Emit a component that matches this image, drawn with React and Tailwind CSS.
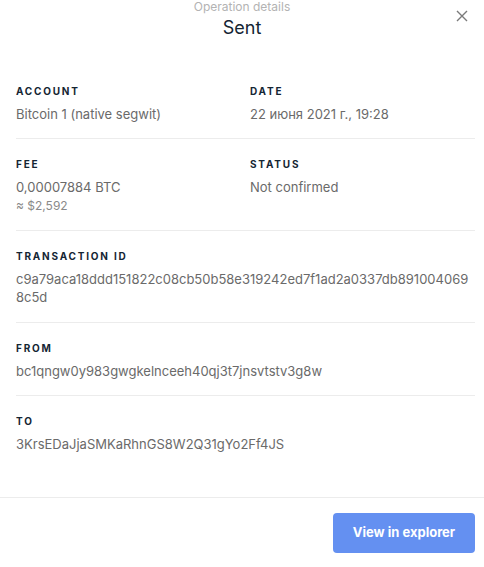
export default function App() {
  const Label = ({ children }) => (
    <div className="text-[10px] leading-[12px] font-bold tracking-[0.18em] text-[#142533] uppercase">{children}</div>
  );
  const Value = ({ children }) => (
    <div className="mt-2 text-[13px] leading-[18px] text-[#6a6a6a] break-all">{children}</div>
  );
  return (
    <div className="w-[484px] h-[567px] bg-white flex flex-col" style={{ fontFamily: "Inter, 'Noto Sans', sans-serif" }}>
      <div className="relative h-[66px] flex flex-col items-center">
        <div className="text-[12px] leading-[14px] text-[#b3b3b3]">Operation details</div>
        <div className="mt-[3px] text-[18px] leading-[22px] text-[#142533]">Sent</div>
        <button className="absolute right-[16px] top-[10px] w-[12px] h-[12px] flex items-center justify-center">
          <svg width="12" height="12" viewBox="0 0 12 12" fill="none" stroke="#7a7a7a" strokeWidth="1.4">
            <path d="M1 1L11 11M11 1L1 11" />
          </svg>
        </button>
      </div>
      <div className="flex-1 pl-4 pr-[9px]">
        <div className="pt-[19px] pb-[15px] border-b border-[#ececec] grid grid-cols-[234px_1fr]">
          <div><Label>Account</Label><Value>Bitcoin 1 (native segwit)</Value></div>
          <div><Label>Date</Label><Value>22 июня 2021 г., 19:28</Value></div>
        </div>
        <div className="pt-[19px] pb-4 border-b border-[#ececec] grid grid-cols-[234px_1fr]">
          <div>
            <Label>Fee</Label>
            <Value>0,00007884 BTC</Value>
            <div className="mt-0.5 text-[12px] leading-[16px] text-[#8a8a8a]">≈ $2,592</div>
          </div>
          <div><Label>Status</Label><Value>Not confirmed</Value></div>
        </div>
        <div className="pt-[19px] pb-4 border-b border-[#ececec]">
          <Label>Transaction ID</Label>
          <Value>c9a79aca18ddd151822c08cb50b58e319242ed7f1ad2a0337db8910040698c5d</Value>
        </div>
        <div className="pt-[19px] pb-[15px] border-b border-[#ececec]">
          <Label>From</Label>
          <Value>bc1qngw0y983gwgkelnceeh40qj3t7jnsvtstv3g8w</Value>
        </div>
        <div className="pt-[19px] pb-4">
          <Label>To</Label>
          <Value>3KrsEDaJjaSMKaRhnGS8W2Q31gYo2Ff4JS</Value>
        </div>
      </div>
      <div className="border-t border-[#ececec] h-[70px] flex items-start justify-end pr-[9px] pt-[15px]">
        <button className="w-[142px] h-[40px] rounded-[4px] bg-[#6490f1] text-white text-[13px] font-bold">View in explorer</button>
      </div>
    </div>
  );
}
